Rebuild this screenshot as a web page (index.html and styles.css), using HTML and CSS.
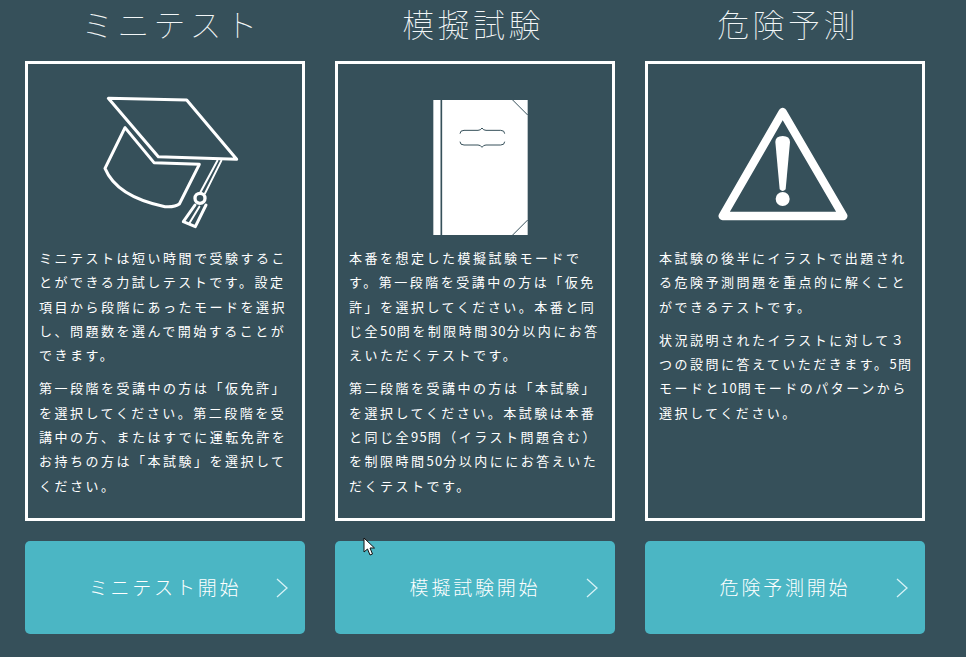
FILE: index.html
```html
<!DOCTYPE html>
<html lang="ja">
<head>
  <meta charset="UTF-8" />
  <meta name="viewport" content="width=device-width, initial-scale=1.0"/>
  <title>テスト選択</title>
  <link rel="stylesheet" href="styles.css">
</head>
<body>

  <div class="modes">

    <div class="mode">
      <h2 class="mode-title title-mini">ミニテスト</h2>
      <div class="card">
        <div class="card-icon">
          <svg class="icon" viewBox="-15 0 540 480">
            <g fill="none" stroke="#fff" stroke-width="9" stroke-linejoin="round" stroke-linecap="round">
              <path d="M85 55 L320 60 L470 238 L235 230 Z"/>
              <path d="M135 143 L75 265 Q110 350 255 380 Q285 382 298 372 L358 253 L222 248 Z"/>
              <path d="M412 242 L362 335" stroke-width="6"/>
              <path d="M424 242 L375 340" stroke-width="6"/>
              <circle cx="360" cy="355" r="15" stroke-width="10"/>
              <path d="M345 375 L310 425 L346 440 L378 375"/>
              <path d="M358 380 L328 430" stroke-width="6"/>
            </g>
          </svg>
        </div>
        <p>ミニテストは短い時間で受験するこ<br>とができる力試しテストです。設定<br>項目から段階にあったモードを選択<br>し、問題数を選んで開始することが<br>できます。</p>
        <p>第一段階を受講中の方は「仮免許」<br>を選択してください。第二段階を受<br>講中の方、またはすでに運転免許を<br>お持ちの方は「本試験」を選択して<br>ください。</p>
      </div>
      <a class="start" href="#">ミニテスト開始<svg class="chevron" viewBox="0 0 12 20"><path d="M1 1 L11 10 L1 19"/></svg></a>
    </div>

    <div class="mode">
      <h2 class="mode-title title-mock">模擬試験</h2>
      <div class="card">
        <div class="card-icon">
          <svg class="icon" viewBox="-75 -15 540 480">
            <rect x="70" y="45" width="283" height="405" fill="#fff"/>
            <path d="M94 45 V450" stroke="#36505a" stroke-width="5"/>
            <g fill="none" stroke="#36505a" stroke-width="3">
              <path d="M308 45 L353 90"/>
              <path d="M308 450 L353 405"/>
              <path d="M150 146 Q150 136 162 136 L204 136 Q212 136 216 129 Q220 136 228 136 L272 136 Q284 136 284 146"/>
              <path d="M150 170 Q150 180 162 180 L204 180 Q212 180 216 187 Q220 180 228 180 L272 180 Q284 180 284 170"/>
            </g>
          </svg>
        </div>
        <p>本番を想定した模擬試験モードで<br>す。第一段階を受講中の方は「仮免<br>許」を選択してください。本番と同<br>じ全<span class="num">50</span>問を制限時間<span class="num">30</span>分以内にお答<br>えいただくテストです。</p>
        <p>第二段階を受講中の方は「本試験」<br>を選択してください。本試験は本番<br>と同じ全<span class="num">95</span>問（イラスト問題含む）<br>を制限時間<span class="num">50</span>分以内ににお答えいた<br>だくテストです。</p>
      </div>
      <a class="start" href="#">模擬試験開始<svg class="chevron" viewBox="0 0 12 20"><path d="M1 1 L11 10 L1 19"/></svg></a>
    </div>

    <div class="mode">
      <h2 class="mode-title title-risk">危険予測</h2>
      <div class="card">
        <div class="card-icon">
          <svg class="icon" viewBox="-15 -30 540 480">
            <path d="M248 66 L68 378 L430 378 Z" fill="none" stroke="#fff" stroke-width="25" stroke-linejoin="round"/>
            <path d="M226 156 Q226 138 248 138 Q270 138 270 156 L257 298 Q248 308 239 298 Z" fill="#fff"/>
            <circle cx="248" cy="327" r="21" fill="#fff"/>
          </svg>
        </div>
        <p>本試験の後半にイラストで出題され<br>る危険予測問題を重点的に解くこと<br>ができるテストです。</p>
        <p>状況説明されたイラストに対して３<br>つの設問に答えていただきます。<span class="num">5</span>問<br>モードと<span class="num">10</span>問モードのパターンから<br>選択してください。</p>
      </div>
      <a class="start" href="#">危険予測開始<svg class="chevron" viewBox="0 0 12 20"><path d="M1 1 L11 10 L1 19"/></svg></a>
    </div>

  </div>

  <svg class="cursor" viewBox="0 0 13 20">
    <path d="M1 1 L1 15 L4.5 12 L7 18 L9.5 17 L7 11 L11.5 11 Z" fill="#fff" stroke="#111" stroke-width="1"/>
  </svg>

</body>
</html>
```

FILE: styles.css
```css
body {
  margin: 0;
  background-color: #36505a;
  color: #fff;
  font-family: "Noto Sans CJK JP", "Noto Sans", sans-serif;
}

.modes {
  display: grid;
  grid-template-columns: repeat(3, 280px);
  gap: 30px;
  padding-left: 25px;
}

.mode {
  display: flex;
  flex-direction: column;
}

.mode-title {
  margin: 0;
  height: 61px;
  line-height: 47px;
  font-size: 32px;
  font-weight: 100;
  letter-spacing: 3.4px;
  text-align: center;
  color: #f2f6f7;
}

.title-mini {
  letter-spacing: 4px;
  text-indent: 13px;
}

.title-mock {
  text-indent: -4px;
}

.title-risk {
  text-indent: 6px;
}

.card {
  box-sizing: border-box;
  height: 460px;
  border: 3px solid #fff;
}

.card-icon {
  box-sizing: border-box;
  height: 182px;
  padding-top: 16px;
  display: flex;
  justify-content: center;
}

.icon {
  width: 180px;
  height: 160px;
}

.card p {
  margin: 0 2px 9px 11px;
  font-size: 13px;
  line-height: 24.3px;
  letter-spacing: 2.5px;
}

.card .num {
  letter-spacing: 1.2px;
}

.start {
  position: relative;
  box-sizing: border-box;
  margin-top: 20px;
  height: 93px;
  padding-bottom: 2px;
  display: flex;
  align-items: center;
  justify-content: center;
  background-color: #4bb6c4;
  border-radius: 5px;
  color: #fff;
  font-size: 19px;
  font-weight: 300;
  letter-spacing: 2.8px;
  text-decoration: none;
}

.chevron {
  position: absolute;
  right: 17px;
  top: 37px;
  width: 12px;
  height: 20px;
  fill: none;
  stroke: #d5f2f6;
  stroke-width: 1.3;
}

.cursor {
  position: absolute;
  left: 363px;
  top: 537px;
  width: 13px;
  height: 20px;
}
```
